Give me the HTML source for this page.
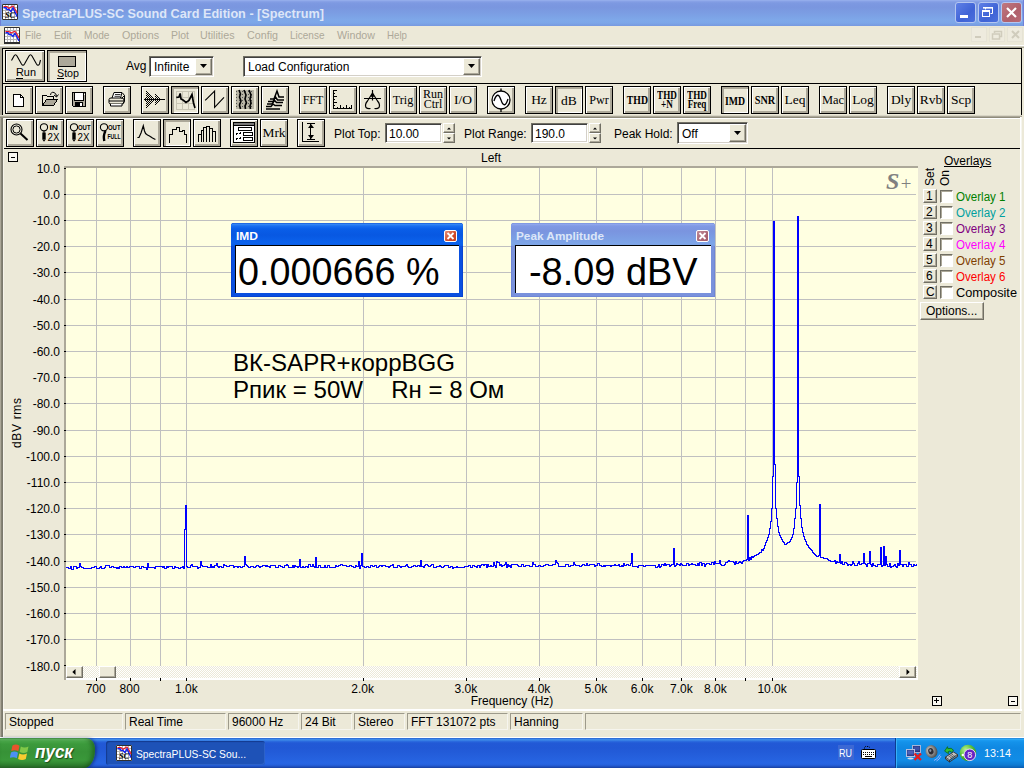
<!DOCTYPE html>
<html><head><meta charset="utf-8"><title>SpectraPLUS-SC Sound Card Edition - [Spectrum]</title>
<style>
html,body{margin:0;padding:0}
body{width:1024px;height:768px;overflow:hidden;background:#ece9d8;position:relative;font-family:"Liberation Sans",sans-serif;font-size:12px;color:#000}
div,span{box-sizing:border-box}
.a{position:absolute}
.t{position:absolute;white-space:nowrap;line-height:1}
#title{left:0;top:0;width:1024px;height:26px;box-shadow:inset 1px 0 0 #6f80d8,inset -1px 0 0 #6f80d8;background:linear-gradient(#9cb4ee 0,#8aa4e8 1px,#7d99e1 3px,#7a96df 7px,#7b9ce2 12px,#7ea8e9 20px,#7ca6e8 23px,#7799df 26px)}
#title .cap{left:22px;top:5px;font-weight:bold;font-size:13.5px;color:#dbe5f8;letter-spacing:0}
.tb{position:absolute;top:2px;width:21px;height:21px;border-radius:3px;border:1px solid #b4c6f0}
#menu .m{top:30px;font-size:11.5px;color:#aca899}
.btn{position:absolute;width:28px;height:28px;background:#ece9d8;border:1px solid #000;box-shadow:inset 1px 1px 0 #fff,inset -1px -1px 0 #aca899,inset -2px -2px 0 #aca899}
.btn.p{background:#ece9d8;box-shadow:inset 1px 1px 0 #aca899,inset 2px 2px 0 #aca899,inset -1px -1px 0 #fff}
.btn svg{position:absolute;left:0;top:0}
.bt{position:absolute;left:0;width:26px;text-align:center;font-family:"Liberation Serif",serif;font-size:11px;line-height:1;white-space:nowrap}
.inp{position:absolute;background:#fff;border:1px solid #716f64;box-shadow:inset 1px 1px 0 #404040,inset -1px -1px 0 #d4d0c8;border-right-color:#fff;border-bottom-color:#fff}
.st{position:absolute;top:713px;height:17px;border:1px solid;border-color:#9d9a8b #f6f5ee #f6f5ee #9d9a8b}
.st span{position:absolute;left:3px;top:2px;font-size:12px;white-space:nowrap;line-height:1}
</style></head><body>
<div id="title" class="a"><svg class="a" style="left:22px;top:2.5px;overflow:visible" width="305" height="21"><text x="0" y="15.0" font-family="Liberation Sans,sans-serif" font-size="13.3" font-weight="bold" font-style="normal" fill="#dde6f8" textLength="302" lengthAdjust="spacingAndGlyphs">SpectraPLUS-SC Sound Card Edition - [Spectrum]</text></svg><svg class="a" style="left:2px;top:4px" width="16" height="16" viewBox="0 0 16 16"><rect x="0" y="0" width="16" height="16" fill="#fff"/><path d="M3.500 1V15M6.500 1V15M9.500 1V15M12.500 1V15M1 3.500H15M1 6.500H15M1 9.500H15M1 12.500H15" stroke="#b4b4b4" stroke-width="1" shape-rendering="crispEdges"/><path d="M0.500 0.500H15.500V15.500H0.500Z" fill="none" stroke="#303030"/><path d="M1.500 2.500H5L7 4.500L9 3L11 2L13 5L15 9" fill="none" stroke="#f01828" stroke-width="1.200"/><path d="M1.500 3.800H4L5 5.500H7L9 7.500L11 4L13 8L15 12.500" fill="none" stroke="#1020f0" stroke-width="1.400"/><text x="3" y="13.800" font-family="Liberation Serif,serif" font-style="italic" font-weight="bold" font-size="9" fill="#000" textLength="10" lengthAdjust="spacingAndGlyphs">SC</text></svg><div class="tb" style="left:955px;background:linear-gradient(135deg,#5f80e6,#3f63d6 60%,#4a6fdc)"><div class="a" style="left:4px;top:12px;width:8px;height:3px;background:#fff"></div></div><div class="tb" style="left:978px;background:linear-gradient(135deg,#5f80e6,#3f63d6 60%,#4a6fdc)"><svg class="a" style="left:0;top:0" width="19" height="19"><path d="M6.5 6.5V4.5H13.5V10.5H11.5" fill="none" stroke="#fff" stroke-width="1"/><rect x="4" y="4" width="10" height="1.6" fill="#fff"/><rect x="3.5" y="7.5" width="7" height="6" fill="none" stroke="#fff"/><rect x="3" y="7" width="8" height="2" fill="#fff"/></svg></div><div class="tb" style="left:1001px;background:linear-gradient(135deg,#c07880,#b0606c 60%,#b86a74)"><svg class="a" style="left:0;top:0" width="19" height="19"><path d="M5 5L14 14M14 5L5 14" stroke="#fff" stroke-width="2.2"/></svg></div></div><div id="menu"><svg class="a" style="left:4px;top:27px" width="16" height="17" viewBox="0 0 16 17"><rect x="0" y="0" width="16" height="17" fill="#fff"/><path d="M3.500 1V15M6.500 1V15M9.500 1V15M12.500 1V15M1 3.500H15M1 6.500H15M1 9.500H15M1 12.500H15" stroke="#b4b4b4" stroke-width="1" shape-rendering="crispEdges"/><path d="M0.500 0.500H15.500V15.500H0.500Z" fill="none" stroke="#303030"/><rect x="0" y="15" width="16" height="2" fill="#303030"/><path d="M1.500 4.500H5L7 6L9 5L11 4.500L13 7L15 11" fill="none" stroke="#f01828" stroke-width="1.200"/><path d="M1.500 5.800H4L5 7.500H7L9 9.500L11 6.500L13 10L15 14" fill="none" stroke="#1020f0" stroke-width="1.400"/></svg><svg class="a" style="left:25px;top:25.700000000000003px;overflow:visible" width="19" height="18"><text x="0" y="13.0" font-family="Liberation Sans,sans-serif" font-size="11.3" font-weight="normal" font-style="normal" fill="#aca899" textLength="16.5" lengthAdjust="spacingAndGlyphs">File</text></svg><svg class="a" style="left:53.5px;top:25.700000000000003px;overflow:visible" width="20" height="18"><text x="0" y="13.0" font-family="Liberation Sans,sans-serif" font-size="11.3" font-weight="normal" font-style="normal" fill="#aca899" textLength="17.5" lengthAdjust="spacingAndGlyphs">Edit</text></svg><svg class="a" style="left:83.5px;top:25.700000000000003px;overflow:visible" width="28" height="18"><text x="0" y="13.0" font-family="Liberation Sans,sans-serif" font-size="11.3" font-weight="normal" font-style="normal" fill="#aca899" textLength="25.5" lengthAdjust="spacingAndGlyphs">Mode</text></svg><svg class="a" style="left:121.5px;top:25.700000000000003px;overflow:visible" width="40" height="18"><text x="0" y="13.0" font-family="Liberation Sans,sans-serif" font-size="11.3" font-weight="normal" font-style="normal" fill="#aca899" textLength="37" lengthAdjust="spacingAndGlyphs">Options</text></svg><svg class="a" style="left:170.5px;top:25.700000000000003px;overflow:visible" width="21" height="18"><text x="0" y="13.0" font-family="Liberation Sans,sans-serif" font-size="11.3" font-weight="normal" font-style="normal" fill="#aca899" textLength="18" lengthAdjust="spacingAndGlyphs">Plot</text></svg><svg class="a" style="left:200px;top:25.700000000000003px;overflow:visible" width="37" height="18"><text x="0" y="13.0" font-family="Liberation Sans,sans-serif" font-size="11.3" font-weight="normal" font-style="normal" fill="#aca899" textLength="34.5" lengthAdjust="spacingAndGlyphs">Utilities</text></svg><svg class="a" style="left:246.5px;top:25.700000000000003px;overflow:visible" width="34" height="18"><text x="0" y="13.0" font-family="Liberation Sans,sans-serif" font-size="11.3" font-weight="normal" font-style="normal" fill="#aca899" textLength="31" lengthAdjust="spacingAndGlyphs">Config</text></svg><svg class="a" style="left:289.5px;top:25.700000000000003px;overflow:visible" width="37" height="18"><text x="0" y="13.0" font-family="Liberation Sans,sans-serif" font-size="11.3" font-weight="normal" font-style="normal" fill="#aca899" textLength="34.5" lengthAdjust="spacingAndGlyphs">License</text></svg><svg class="a" style="left:336.5px;top:25.700000000000003px;overflow:visible" width="41" height="18"><text x="0" y="13.0" font-family="Liberation Sans,sans-serif" font-size="11.3" font-weight="normal" font-style="normal" fill="#aca899" textLength="38" lengthAdjust="spacingAndGlyphs">Window</text></svg><svg class="a" style="left:386.5px;top:25.700000000000003px;overflow:visible" width="23" height="18"><text x="0" y="13.0" font-family="Liberation Sans,sans-serif" font-size="11.3" font-weight="normal" font-style="normal" fill="#aca899" textLength="20" lengthAdjust="spacingAndGlyphs">Help</text></svg><svg class="a" style="left:970px;top:26px" width="54" height="18"><g fill="none" stroke="#d6d2c2"><rect x="1.5" y="1.5" width="15" height="14" fill="#eeebde" stroke="#e6e3d5"/><rect x="19.5" y="1.5" width="15" height="14" fill="#eeebde" stroke="#e6e3d5"/><rect x="37.5" y="1.5" width="15" height="14" fill="#eeebde" stroke="#e6e3d5"/></g><rect x="5" y="10" width="6" height="2" fill="#d0ccbc"/><path d="M24.5 7V5.5H31.5V10.5H30" fill="none" stroke="#d0ccbc" stroke-width="1.5"/><rect x="22.5" y="8" width="7" height="5" fill="none" stroke="#d0ccbc" stroke-width="1.5"/><path d="M42 5L49 12M49 5L42 12" stroke="#d0ccbc" stroke-width="2"/></svg></div><div class="a" style="left:0;top:45px;width:1024px;height:1px;background:#fff"></div><div class="a" style="left:0;top:46px;width:1024px;height:2px;background:linear-gradient(#d2cfbf 0,#d2cfbf 1px,#a8a594 1px)"></div><div class="a" style="left:0;top:47px;width:2px;height:69px;background:#aca899"></div><div class="a" style="left:2px;top:48px;width:1020px;height:36px;border:1px solid #000"></div><div class="a" style="left:2px;top:83px;width:1020px;height:33px;border:1px solid #000;border-bottom:0"></div><div class="a" style="left:0;top:115px;width:1022px;height:4px;background:linear-gradient(#d8d5c5 0,#d8d5c5 1px,#aca899 1px,#aca899 2px,#8f8c7c 2px,#8f8c7c 3px,#fff 3px)"></div><div class="a" style="left:3px;top:148px;width:1018px;height:1px;background:#000"></div><div class="a" style="left:0;top:118px;width:4px;height:620px;background:linear-gradient(90deg,#aca899 0,#aca899 1px,#8a8878 1px,#77756a 3px,#f6f4ea 3px)"></div><div class="a" style="left:1020px;top:117px;width:2px;height:592px;background:linear-gradient(90deg,#fff 0,#fff 1px,#f6f5ee 1px)"></div><div class="btn" style="left:5px;top:50px;width:40px;height:32px"><svg width="38" height="30" viewBox="0 0 38 30" shape-rendering="crispEdges" ><path d="M5.500 9.500L8 5Q9.500 2.500 11 5L15.500 13Q17 15.500 18.500 13L23 5Q24.500 2.500 26 5L30.500 13Q32 15.500 33.500 13L34.500 9" fill="none" stroke="#000" stroke-width="1.100" shape-rendering="auto"/></svg></div><svg class="a" style="left:15.5px;top:63.3px;overflow:visible" width="23" height="19"><text x="0" y="13.0" font-family="Liberation Sans,sans-serif" font-size="11.5" font-weight="normal" font-style="normal" fill="#000" textLength="20" lengthAdjust="spacingAndGlyphs">Run</text></svg><div class="a" style="left:16px;top:78px;width:7px;height:1px;background:#000"></div><div class="btn p" style="left:47px;top:50px;width:40px;height:32px"><div class="a" style="left:10px;top:5px;width:18px;height:11px;background:#aca899;border:1px solid #000"></div></div><svg class="a" style="left:56.5px;top:63.5px;overflow:visible" width="25" height="19"><text x="0" y="13.0" font-family="Liberation Sans,sans-serif" font-size="11.5" font-weight="normal" font-style="normal" fill="#000" textLength="22" lengthAdjust="spacingAndGlyphs">Stop</text></svg><div class="a" style="left:57px;top:78px;width:7px;height:1px;background:#000"></div><span class="t" style="left:126px;top:60px;font-size:12px">Avg</span><div class="inp" style="left:149px;top:56px;width:65px;height:21px"><span class="t" style="left:4px;top:4px;font-size:12px">Infinite</span><div class="a" style="right:1px;top:1px;width:17px;height:17px;background:#ece9d8;border:1px solid;border-color:#fff #716f64 #716f64 #fff;box-shadow:inset -1px -1px 0 #aca899"><svg class="a" style="left:4px;top:5px" width="7" height="4"><path d="M0 0H7L3.500 4Z" fill="#000"/></svg></div></div><div class="inp" style="left:243px;top:56px;width:239px;height:21px"><span class="t" style="left:4px;top:4px;font-size:12px">Load Configuration</span><div class="a" style="right:1px;top:1px;width:17px;height:17px;background:#ece9d8;border:1px solid;border-color:#fff #716f64 #716f64 #fff;box-shadow:inset -1px -1px 0 #aca899"><svg class="a" style="left:4px;top:5px" width="7" height="4"><path d="M0 0H7L3.500 4Z" fill="#000"/></svg></div></div><div class="btn" style="left:5px;top:86px;width:28px;height:28px"><svg width="26" height="26" viewBox="0 0 26 26" shape-rendering="crispEdges" ><path d="M7.5 7.5H14.5L17.5 10.5V19.5H7.5Z" fill="#fff" stroke="#000"/><path d="M14.5 7.5V10.5H17.5" fill="none" stroke="#000"/></svg></div><div class="btn" style="left:35px;top:86px;width:28px;height:28px"><svg width="26" height="26" viewBox="0 0 26 26" shape-rendering="crispEdges" ><path d="M6.500 18.500V8.500H10.500L11.500 9.500H17.500V12.500" fill="none" stroke="#000"/><path d="M6.500 18.500L10.500 12.500H21.500L17.500 18.500Z" fill="#aca899" stroke="#000"/><path d="M14.500 8Q15 4.500 18 5.500Q20.500 6.500 20.500 9.500M20.500 10L18 8M20.500 10L22.500 7.500" fill="none" stroke="#000" shape-rendering="auto"/></svg></div><div class="btn" style="left:65px;top:86px;width:28px;height:28px"><svg width="26" height="26" viewBox="0 0 26 26" shape-rendering="crispEdges" ><path d="M6.500 5.500H19.500V19.500H7.500L6.500 18.500Z" fill="#aca899" stroke="#000"/><rect x="9" y="6" width="8" height="7" fill="#fff"/><path d="M8.500 5.500V13.500H17.500V5.500" fill="none" stroke="#000"/><rect x="9" y="15" width="8" height="4" fill="#000"/><rect x="14" y="16" width="2" height="3" fill="#fff"/><rect x="18" y="7" width="1" height="1" fill="#fff"/></svg></div><div class="btn" style="left:103px;top:86px;width:28px;height:28px"><svg width="26" height="26" viewBox="0 0 26 26" shape-rendering="crispEdges" ><g shape-rendering="auto" fill="none" stroke="#000"><path d="M8 11L10 5.500H18L16.500 11" fill="#fff"/><path d="M11 7.500H16.500M10.500 9.300H16" stroke-width="0.8"/><path d="M5 12.500Q5 11 7 11H17.500Q20 11 20 13V15.500Q20 17 18 17H7Q5 17 5 15.500Z" fill="#ece9d8"/><path d="M5 14H20" /><path d="M6.500 17V19H18V17" fill="#fff"/><path d="M17.500 11.500L20.500 8.500V14.500L18.500 16.500" /><path d="M18.500 6L20.500 8.500"/></g></svg></div><div class="btn" style="left:141px;top:86px;width:28px;height:28px"><svg width="26" height="26" viewBox="0 0 26 26" shape-rendering="crispEdges" ><defs><pattern id="chk" width="2" height="2" patternUnits="userSpaceOnUse"><rect x="0" y="0" width="1" height="1" fill="#000"/><rect x="1" y="1" width="1" height="1" fill="#000"/></pattern></defs><path d="M4 4L12.500 12.500L4 21Z" fill="url(#chk)"/><path d="M13 6L20.500 12.500L13 19Z" fill="url(#chk)"/><path d="M2 12.500H23" stroke="#000" stroke-width="1"/><path d="M2 12.500L4 11V14Z" fill="#000"/></svg></div><div class="btn p" style="left:171px;top:86px;width:28px;height:28px"><svg width="26" height="26" viewBox="0 0 26 26" shape-rendering="crispEdges" ><rect x="4.500" y="4.500" width="18" height="18" fill="none" stroke="#c8c5b4"/><path d="M10.500 5V22M16.500 5V22M5 10.500H22M5 16.500H22" stroke="#c8c5b4" fill="none"/><path d="M4.300 10.300L7 10L8.200 6.400L9 12L11 13L14 15.500L17 13.500L20 7.500L21.500 16L23 21" fill="none" stroke="#000" stroke-width="1.700" shape-rendering="auto"/></svg></div><div class="btn" style="left:201px;top:86px;width:28px;height:28px"><svg width="26" height="26" viewBox="0 0 26 26" shape-rendering="crispEdges" ><path d="M3.200 13.400L12.600 4V20.400L22 10.300" fill="none" stroke="#000" stroke-width="1.100" shape-rendering="auto"/></svg></div><div class="btn" style="left:231px;top:86px;width:28px;height:28px"><svg width="26" height="26" viewBox="0 0 26 26" shape-rendering="crispEdges" ><defs><pattern id="dot" width="3" height="3" patternUnits="userSpaceOnUse"><rect x="0" y="0" width="3" height="3" fill="#b9b6a6"/><rect x="1" y="1" width="1" height="1" fill="#555"/></pattern></defs><rect x="4" y="3" width="18" height="19" fill="url(#dot)"/><g shape-rendering="auto" fill="none" stroke="#000" stroke-width="1.600"><path d="M7 3L8.500 7L7.500 10L9 14L7.500 18L8.500 22"/><path d="M12 3L14 8L13 12L14.500 16L13 19L13.500 22"/><path d="M17 3L19 8L18 12L19 16L18 19L18.500 22"/></g></svg></div><div class="btn" style="left:261px;top:86px;width:28px;height:28px"><svg width="26" height="26" viewBox="0 0 26 26" shape-rendering="crispEdges" ><g shape-rendering="auto" fill="none" stroke="#000" stroke-width="1.500"><path d="M8 12H12L15 4L17 10H22"/><path d="M6 14.500H11L13.500 10L15.500 13H22"/><path d="M5 17H10L12.500 13.500L14.500 15.500H21"/><path d="M4 19.500H9L11 17L13 18.500H20"/><path d="M4 22H18"/></g></svg></div><div class="btn" style="left:299px;top:86px;width:28px;height:28px"><span class="bt" style="top:7px;font-size:12px;font-family:'Liberation Serif',serif;font-weight:normal;letter-spacing:0px">FFT</span></div><div class="btn" style="left:329px;top:86px;width:28px;height:28px"><svg width="26" height="26" viewBox="0 0 26 26" shape-rendering="crispEdges" ><path d="M3.500 3V21.500H22" fill="none" stroke="#000"/><path d="M4 3.500H7M4 6.500H5M4 9.500H7M4 12.500H5M4 15.500H7M4 18.500H5M7.500 21V20M10.500 21V18M13.500 21V20M16.500 21V18M19.500 21V20M21.500 21V18" stroke="#000" fill="none"/></svg></div><div class="btn" style="left:359px;top:86px;width:28px;height:28px"><svg width="26" height="26" viewBox="0 0 26 26" shape-rendering="crispEdges" ><g shape-rendering="auto" fill="none" stroke="#000" stroke-width="1.200"><path d="M12.500 3V13.500M4 11.500H21"/><path d="M12.500 6L7.500 14Q4.500 17.500 6 20.500Q7.500 22 10.500 21.500M12.500 6L17.500 14Q20.500 17.500 19 20.500Q17.500 22 14.500 21.500"/><path d="M11 8.500H14" stroke-width="2.500"/></g></svg></div><div class="btn" style="left:389px;top:86px;width:28px;height:28px"><span class="bt" style="top:6px;font-size:13.5px;font-family:'Liberation Serif',serif;font-weight:normal;letter-spacing:0px;transform:scaleX(0.9)">Trig</span></div><div class="btn" style="left:419px;top:86px;width:28px;height:28px"><span class="bt" style="top:1px;font-size:12px;font-family:'Liberation Serif',serif;font-weight:normal;letter-spacing:0px">Run</span><span class="bt" style="top:11px;font-size:12px;font-family:'Liberation Serif',serif;font-weight:normal;letter-spacing:0px">Ctrl</span></div><div class="btn" style="left:449px;top:86px;width:28px;height:28px"><span class="bt" style="top:6px;font-size:13.5px;font-family:'Liberation Serif',serif;font-weight:normal;letter-spacing:0px">I/O</span></div><div class="btn" style="left:487px;top:86px;width:28px;height:28px"><svg width="26" height="26" viewBox="0 0 26 26" shape-rendering="crispEdges" ><g shape-rendering="auto" fill="#fff" stroke="#000" stroke-width="1.3"><circle cx="13" cy="13" r="9"/><path d="M13 1.500V4M13 22V25" /><path d="M6 14Q9.500 3 13 13T20 12" fill="none"/></g></svg></div><div class="btn" style="left:525px;top:86px;width:28px;height:28px"><span class="bt" style="top:6px;font-size:13.5px;font-family:'Liberation Serif',serif;font-weight:normal;letter-spacing:0px">Hz</span></div><div class="btn p" style="left:555px;top:86px;width:28px;height:28px"><span class="bt" style="top:7px;font-size:13.5px;font-family:'Liberation Serif',serif;font-weight:normal;letter-spacing:0px">dB</span></div><div class="btn" style="left:585px;top:86px;width:28px;height:28px"><span class="bt" style="top:6px;font-size:13.5px;font-family:'Liberation Serif',serif;font-weight:normal;letter-spacing:0px;transform:scaleX(0.9)">Pwr</span></div><div class="btn" style="left:623px;top:86px;width:28px;height:28px"><span class="bt" style="top:7px;font-size:12.5px;font-family:'Liberation Serif',serif;font-weight:bold;letter-spacing:0px;transform:scaleX(0.78)">THD</span></div><div class="btn" style="left:653px;top:86px;width:28px;height:28px"><span class="bt" style="top:2px;font-size:12px;font-family:'Liberation Serif',serif;font-weight:bold;letter-spacing:0px;transform:scaleX(0.76)">THD</span><span class="bt" style="top:11px;font-size:12px;font-family:'Liberation Serif',serif;font-weight:bold;letter-spacing:0px;transform:scaleX(0.76)">+N</span></div><div class="btn" style="left:683px;top:86px;width:28px;height:28px"><span class="bt" style="top:2px;font-size:12px;font-family:'Liberation Serif',serif;font-weight:bold;letter-spacing:0px;transform:scaleX(0.76)">THD</span><span class="bt" style="top:11px;font-size:12px;font-family:'Liberation Serif',serif;font-weight:bold;letter-spacing:0px;transform:scaleX(0.76)">Freq</span></div><div class="btn p" style="left:721px;top:86px;width:28px;height:28px"><span class="bt" style="top:8px;font-size:12.5px;font-family:'Liberation Serif',serif;font-weight:bold;letter-spacing:0px;transform:scaleX(0.78)">IMD</span></div><div class="btn" style="left:751px;top:86px;width:28px;height:28px"><span class="bt" style="top:7px;font-size:12.5px;font-family:'Liberation Serif',serif;font-weight:bold;letter-spacing:0px;transform:scaleX(0.82)">SNR</span></div><div class="btn" style="left:781px;top:86px;width:28px;height:28px"><span class="bt" style="top:6px;font-size:13.5px;font-family:'Liberation Serif',serif;font-weight:normal;letter-spacing:0px">Leq</span></div><div class="btn" style="left:819px;top:86px;width:28px;height:28px"><span class="bt" style="top:6px;font-size:13.5px;font-family:'Liberation Serif',serif;font-weight:normal;letter-spacing:0px;transform:scaleX(0.92)">Mac</span></div><div class="btn" style="left:849px;top:86px;width:28px;height:28px"><span class="bt" style="top:6px;font-size:13.5px;font-family:'Liberation Serif',serif;font-weight:normal;letter-spacing:0px">Log</span></div><div class="btn" style="left:887px;top:86px;width:28px;height:28px"><span class="bt" style="top:6px;font-size:13.5px;font-family:'Liberation Serif',serif;font-weight:normal;letter-spacing:0px">Dly</span></div><div class="btn" style="left:917px;top:86px;width:28px;height:28px"><span class="bt" style="top:6px;font-size:13.5px;font-family:'Liberation Serif',serif;font-weight:normal;letter-spacing:0px">Rvb</span></div><div class="btn" style="left:947px;top:86px;width:28px;height:28px"><span class="bt" style="top:6px;font-size:13.5px;font-family:'Liberation Serif',serif;font-weight:normal;letter-spacing:0px">Scp</span></div><div class="btn" style="left:6px;top:119px;width:28px;height:28px"><svg width="26" height="26" viewBox="0 0 26 26" shape-rendering="crispEdges" ><g shape-rendering="auto" fill="none" stroke="#000"><circle cx="9.500" cy="9.500" r="5.500" stroke-width="1.1"/><circle cx="9.500" cy="9.500" r="3.600" stroke-width="1"/><path d="M13.500 13.500L20.500 20" stroke-width="2"/></g></svg></div><div class="btn" style="left:36px;top:119px;width:28px;height:28px"><svg width="26" height="26" viewBox="0 0 26 26" shape-rendering="crispEdges" ><g shape-rendering="auto" fill="none" stroke="#000"><circle cx="7" cy="7.300" r="3.600" stroke-width="1.100"/><path d="M7 11V13" stroke-width="1"/><path d="M7 12.500V19.500" stroke-width="3.400"/><path d="M5.300 19.500L7 21.800L8.700 19.500Z" fill="#000" stroke="none"/></g><text x="12.5" y="10" font-family="Liberation Sans,sans-serif" font-size="7" font-weight="bold" textLength="8.5" lengthAdjust="spacingAndGlyphs">IN</text><text x="10.500" y="21.300" font-family="Liberation Sans,sans-serif" font-size="11" textLength="12" lengthAdjust="spacingAndGlyphs">2X</text></svg></div><div class="btn" style="left:66px;top:119px;width:28px;height:28px"><svg width="26" height="26" viewBox="0 0 26 26" shape-rendering="crispEdges" ><g shape-rendering="auto" fill="none" stroke="#000"><circle cx="7" cy="7.300" r="3.600" stroke-width="1.100"/><path d="M7 11V13" stroke-width="1"/><path d="M7 12.500V19.500" stroke-width="3.400"/><path d="M5.300 19.500L7 21.800L8.700 19.500Z" fill="#000" stroke="none"/></g><text x="11" y="10" font-family="Liberation Sans,sans-serif" font-size="7" font-weight="bold" textLength="12.5" lengthAdjust="spacingAndGlyphs">OUT</text><text x="10.500" y="21.300" font-family="Liberation Sans,sans-serif" font-size="11" textLength="12" lengthAdjust="spacingAndGlyphs">2X</text></svg></div><div class="btn" style="left:96px;top:119px;width:28px;height:28px"><svg width="26" height="26" viewBox="0 0 26 26" shape-rendering="crispEdges" ><g shape-rendering="auto" fill="none" stroke="#000"><circle cx="7" cy="7.300" r="3.600" stroke-width="1.100"/><path d="M8.500 11Q6 15.500 7.300 21" stroke-width="2.400"/></g><text x="11" y="10" font-family="Liberation Sans,sans-serif" font-size="7" font-weight="bold" textLength="12.500" lengthAdjust="spacingAndGlyphs">OUT</text><text x="10.500" y="19" font-family="Liberation Sans,sans-serif" font-size="7" font-weight="bold" textLength="13" lengthAdjust="spacingAndGlyphs">FULL</text></svg></div><div class="btn" style="left:133px;top:119px;width:28px;height:28px"><svg width="26" height="26" viewBox="0 0 26 26" shape-rendering="crispEdges" ><path d="M3.400 17.500H5L7 13L9.300 5.800L10.500 11L11.600 13.600L13.500 15L15.500 16L18.500 18L21.400 19.500" fill="none" stroke="#000" stroke-width="1.200" shape-rendering="auto"/></svg></div><div class="btn p" style="left:163px;top:119px;width:28px;height:28px"><svg width="26" height="26" viewBox="0 0 26 26" shape-rendering="crispEdges" ><path d="M5.500 22.500V14.500H8.500V9.500H12.500V7.500H15.500V11.500H18.500V10.500H20.500V14.500H22.500V22.500" fill="none" stroke="#000" stroke-width="1"/></svg></div><div class="btn" style="left:193px;top:119px;width:28px;height:28px"><svg width="26" height="26" viewBox="0 0 26 26" shape-rendering="crispEdges" ><path d="M4.500 21.500V14.500H7.500V21.500M7.500 14.500V10.500H9.500V21.500M9.500 10.500V7.500H12.500V21.500M12.500 7.500V6.500H15.500V21.500M15.500 8.500H18.500V21.500M18.500 11.500H21.500V21.500" fill="none" stroke="#000"/></svg></div><div class="btn" style="left:230px;top:119px;width:28px;height:28px"><svg width="26" height="26" viewBox="0 0 26 26" shape-rendering="crispEdges" ><rect x="2.500" y="2.500" width="21" height="20" fill="#fff" stroke="#000"/><rect x="3" y="3" width="20" height="2" fill="#777"/><path d="M3 5.500H23" stroke="#000"/><rect x="7.500" y="7.500" width="13" height="3" fill="#fff" stroke="#000"/><rect x="12.500" y="12.500" width="9" height="3" fill="#fff" stroke="#000"/><rect x="12.500" y="17.500" width="9" height="3" fill="#fff" stroke="#000"/><path d="M5 13.500H7M8 13.500H10M5 18.500H7M8 18.500H10M5 14.500H6M9 12.500H10M5 19.500H6M9 17.500H10" stroke="#000"/></svg></div><div class="btn" style="left:260px;top:119px;width:28px;height:28px"><span class="bt" style="top:6px;font-size:13.5px;font-family:'Liberation Serif',serif;font-weight:normal;letter-spacing:0px">Mrk</span></div><div class="btn" style="left:297px;top:119px;width:28px;height:28px"><svg width="26" height="26" viewBox="0 0 26 26" shape-rendering="crispEdges" ><path d="M4.500 2V21.500H21" fill="none" stroke="#000"/><path d="M9 3.500H17M9 19.500H17M12.500 4V19" stroke="#000" fill="none"/><path d="M13 4L10 8H16ZM13 19L10 15H16Z" fill="#000" shape-rendering="auto"/></svg></div><span class="t" style="left:334px;top:128px;font-size:12px">Plot Top:</span><div class="inp" style="left:385px;top:123px;width:57px;height:20px"><span class="t" style="left:3px;top:4px;font-size:12px">10.00</span></div><div class="a" style="left:443px;top:123px;width:12px;height:20px"><div style="position:absolute;left:0;width:12px;height:10px;background:#ece9d8;border:1px solid;border-color:#fff #716f64 #716f64 #fff;box-shadow:inset -1px -1px 0 #aca899;top:0"><svg class="a" style="left:3px;top:3px" width="5" height="3"><path d="M0 2.500L2 0.500L4 2.500Z" fill="#000"/></svg></div><div style="position:absolute;left:0;width:12px;height:10px;background:#ece9d8;border:1px solid;border-color:#fff #716f64 #716f64 #fff;box-shadow:inset -1px -1px 0 #aca899;top:10px"><svg class="a" style="left:3px;top:3px" width="5" height="3"><path d="M0 0.500L2 2.500L4 0.500Z" fill="#000"/></svg></div></div><span class="t" style="left:464px;top:128px;font-size:12px">Plot Range:</span><div class="inp" style="left:531px;top:123px;width:57px;height:20px"><span class="t" style="left:3px;top:4px;font-size:12px">190.0</span></div><div class="a" style="left:589px;top:123px;width:12px;height:20px"><div style="position:absolute;left:0;width:12px;height:10px;background:#ece9d8;border:1px solid;border-color:#fff #716f64 #716f64 #fff;box-shadow:inset -1px -1px 0 #aca899;top:0"><svg class="a" style="left:3px;top:3px" width="5" height="3"><path d="M0 2.500L2 0.500L4 2.500Z" fill="#000"/></svg></div><div style="position:absolute;left:0;width:12px;height:10px;background:#ece9d8;border:1px solid;border-color:#fff #716f64 #716f64 #fff;box-shadow:inset -1px -1px 0 #aca899;top:10px"><svg class="a" style="left:3px;top:3px" width="5" height="3"><path d="M0 0.500L2 2.500L4 0.500Z" fill="#000"/></svg></div></div><span class="t" style="left:614px;top:128px;font-size:12px">Peak Hold:</span><div class="inp" style="left:677px;top:122px;width:71px;height:22px"><span class="t" style="left:4px;top:5px;font-size:12px">Off</span><div class="a" style="right:1px;top:1px;width:17px;height:18px;background:#ece9d8;border:1px solid;border-color:#fff #716f64 #716f64 #fff;box-shadow:inset -1px -1px 0 #aca899"><svg class="a" style="left:4px;top:6px" width="7" height="4"><path d="M0 0H7L3.500 4Z" fill="#000"/></svg></div></div><div class="a" style="left:64px;top:166px;width:854px;height:514px;background:#fff;border-left:2px solid #aca899;border-top:2px solid #aca899"></div><svg class="a" style="left:0;top:0" width="1024" height="710" viewBox="0 0 1024 710"><rect x="66" y="168" width="852" height="498" fill="#ffffe1"/><path d="M96.5 168V666M130.5 168V666M160.5 168V666M186.5 168V666M363.5 168V666M466.5 168V666M539.5 168V666M596.5 168V666M642.5 168V666M681.5 168V666M715.5 168V666M745.5 168V666M772.5 168V666M66 194.5H916M66 220.5H916M66 246.5H916M66 272.5H916M66 299.5H916M66 325.5H916M66 351.5H916M66 377.5H916M66 403.5H916M66 430.5H916M66 456.5H916M66 482.5H916M66 508.5H916M66 534.5H916M66 561.5H916M66 587.5H916M66 613.5H916M66 639.5H916" stroke="#c0c0c0" stroke-width="1" fill="none" shape-rendering="crispEdges"/><path d="M64 168.5H66M64 194.5H66M64 220.5H66M64 246.5H66M64 272.5H66M64 299.5H66M64 325.5H66M64 351.5H66M64 377.5H66M64 403.5H66M64 430.5H66M64 456.5H66M64 482.5H66M64 508.5H66M64 534.5H66M64 561.5H66M64 587.5H66M64 613.5H66M64 639.5H66M64 665.5H66M96.5 678V681M130.5 678V681M160.5 678V681M186.5 678V681M363.5 678V681M466.5 678V681M539.5 678V681M596.5 678V681M642.5 678V681M681.5 678V681M715.5 678V681M745.5 678V681M772.5 678V681" stroke="#000" stroke-width="1" fill="none" shape-rendering="crispEdges"/><path d="M66 567.5H67.5H68.5V568.5H69.5H70.5V566.5H71.5V569.5H72.5H73.5V566.5H74.5H75.5H76.5V568.5H77.5V567.5H78.5H79.5V563.5H80.5V566.5H81.5V567.5H82.5H83.5V568.5H84.5H85.5H86.5H87.5H88.5H89.5H90.5H91.5V567.5H92.5H93.5H94.5V566.5H95.5H96.5V568.5H97.5H98.5H99.5V567.5H100.5V566.5H101.5V568.5H102.5H103.5H104.5V567.5H105.5V565.5H106.5H107.5H108.5H109.5V567.5H110.5H111.5V566.5H112.5H113.5V567.5H114.5H115.5H116.5V568.5H117.5V567.5H118.5V568.5H119.5V566.5H120.5H121.5V567.5H122.5H123.5V566.5H124.5V567.5H125.5H126.5V566.5H127.5V567.5H128.5H129.5V566.5H130.5H131.5H132.5H133.5V567.5H134.5H135.5V566.5H136.5H137.5H138.5H139.5V568.5H140.5H141.5V566.5H142.5H143.5V567.5H144.5H145.5H146.5V569.5H147.5V563.5H148.5V567.5H149.5H150.5H151.5H152.5H153.5H154.5V568.5H155.5V566.5H156.5H157.5H158.5H159.5H160.5H161.5H162.5V567.5H163.5V566.5H164.5V568.5H165.5H166.5V566.5H167.5V567.5H168.5V566.5H169.5H170.5H171.5H172.5V568.5H173.5H174.5V566.5H175.5V567.5H176.5H177.5H178.5V568.5H179.5H180.5V567.5H181.5H182.5V566.5H183.5V568.5H184.5V529.5H185.5V505.5H186.5V566.5H187.5V567.5H188.5H189.5H190.5V565.5H191.5V564.5H192.5V566.5H193.5H194.5H195.5H196.5H197.5V568.5H198.5V567.5H199.5H200.5V561.5H201.5V565.5H202.5V566.5H203.5H204.5H205.5H206.5H207.5V567.5H208.5H209.5H210.5V564.5H211.5V567.5H212.5V566.5H213.5V567.5H214.5V565.5H215.5H216.5V563.5H217.5V566.5H218.5V567.5H219.5V566.5H220.5H221.5V567.5H222.5H223.5V564.5H224.5V565.5H225.5H226.5V566.5H227.5H228.5H229.5V565.5H230.5H231.5H232.5H233.5V567.5H234.5V566.5H235.5H236.5H237.5V567.5H238.5V566.5H239.5H240.5V567.5H241.5H242.5V566.5H243.5H244.5V556.5H245.5V564.5H246.5V565.5H247.5V566.5H248.5V567.5H249.5H250.5V566.5H251.5H252.5H253.5V567.5H254.5H255.5V566.5H256.5V565.5H257.5H258.5V566.5H259.5V567.5H260.5V566.5H261.5H262.5V565.5H263.5H264.5H265.5V566.5H266.5V565.5H267.5V566.5H268.5H269.5V567.5H270.5V565.5H271.5H272.5H273.5H274.5H275.5V567.5H276.5H277.5H278.5V565.5H279.5H280.5V566.5H281.5H282.5V567.5H283.5H284.5V565.5H285.5H286.5V564.5H287.5V565.5H288.5V567.5H289.5H290.5H291.5H292.5V565.5H293.5V567.5H294.5V565.5H295.5V566.5H296.5H297.5V567.5H298.5V566.5H299.5V559.5H300.5V567.5H301.5H302.5V566.5H303.5V567.5H304.5H305.5V566.5H306.5H307.5V567.5H308.5V564.5H309.5H310.5V566.5H311.5H312.5V564.5H313.5V566.5H314.5V567.5H315.5V557.5H316.5V567.5H317.5H318.5V565.5H319.5H320.5V567.5H321.5H322.5H323.5H324.5V565.5H325.5V567.5H326.5H327.5V565.5H328.5H329.5V567.5H330.5H331.5H332.5H333.5H334.5H335.5V565.5H336.5V566.5H337.5H338.5V565.5H339.5H340.5V564.5H341.5H342.5V565.5H343.5H344.5H345.5H346.5V566.5H347.5H348.5H349.5V565.5H350.5H351.5V566.5H352.5H353.5V567.5H354.5H355.5V565.5H356.5V566.5H357.5H358.5V561.5H359.5V568.5H360.5V565.5H361.5V553.5H362.5V566.5H363.5H364.5V567.5H365.5H366.5V566.5H367.5H368.5V567.5H369.5H370.5V565.5H371.5H372.5V566.5H373.5H374.5V565.5H375.5H376.5V567.5H377.5H378.5V566.5H379.5V565.5H380.5H381.5V566.5H382.5V565.5H383.5H384.5H385.5V566.5H386.5H387.5H388.5V567.5H389.5V566.5H390.5V565.5H391.5H392.5V564.5H393.5V567.5H394.5H395.5H396.5H397.5V565.5H398.5H399.5V566.5H400.5V567.5H401.5V566.5H402.5H403.5H404.5H405.5V565.5H406.5V564.5H407.5V566.5H408.5V567.5H409.5H410.5H411.5V566.5H412.5H413.5V565.5H414.5H415.5V566.5H416.5H417.5V565.5H418.5H419.5V566.5H420.5V560.5H421.5V566.5H422.5H423.5V567.5H424.5V565.5H425.5V564.5H426.5H427.5V565.5H428.5V566.5H429.5H430.5V565.5H431.5V564.5H432.5H433.5V567.5H434.5H435.5H436.5V566.5H437.5H438.5H439.5V565.5H440.5V566.5H441.5V567.5H442.5H443.5V566.5H444.5V565.5H445.5H446.5H447.5H448.5V567.5H449.5H450.5V566.5H451.5H452.5V568.5H453.5V567.5H454.5H455.5H456.5V566.5H457.5V567.5H458.5H459.5H460.5H461.5H462.5H463.5H464.5V566.5H465.5H466.5H467.5H468.5V565.5H469.5H470.5V567.5H471.5H472.5V565.5H473.5H474.5V566.5H475.5H476.5V567.5H477.5V565.5H478.5H479.5V567.5H480.5V565.5H481.5V564.5H482.5H483.5V565.5H484.5V564.5H485.5H486.5V567.5H487.5V564.5H488.5V566.5H489.5H490.5V565.5H491.5V566.5H492.5H493.5V562.5H494.5V565.5H495.5V567.5H496.5V561.5H497.5V562.5H498.5H499.5V565.5H500.5V564.5H501.5V566.5H502.5V565.5H503.5H504.5V564.5H505.5V562.5H506.5V567.5H507.5V564.5H508.5V566.5H509.5V565.5H510.5V567.5H511.5V564.5H512.5H513.5H514.5H515.5H516.5H517.5V565.5H518.5V566.5H519.5H520.5H521.5V564.5H522.5H523.5V566.5H524.5H525.5V565.5H526.5H527.5H528.5H529.5V566.5H530.5H531.5H532.5V562.5H533.5V564.5H534.5H535.5V566.5H536.5H537.5H538.5V565.5H539.5H540.5V566.5H541.5H542.5H543.5V565.5H544.5H545.5V564.5H546.5H547.5H548.5V565.5H549.5H550.5H551.5H552.5V564.5H553.5H554.5H555.5V560.5H556.5V562.5H557.5V563.5H558.5V566.5H559.5H560.5H561.5H562.5H563.5H564.5H565.5V564.5H566.5H567.5H568.5V566.5H569.5H570.5V565.5H571.5H572.5H573.5V562.5H574.5V564.5H575.5V565.5H576.5H577.5H578.5H579.5V566.5H580.5H581.5V565.5H582.5V564.5H583.5H584.5V565.5H585.5H586.5V563.5H587.5V565.5H588.5H589.5V564.5H590.5H591.5H592.5H593.5H594.5V566.5H595.5V565.5H596.5H597.5V563.5H598.5H599.5V565.5H600.5H601.5V566.5H602.5H603.5V565.5H604.5V566.5H605.5V565.5H606.5H607.5H608.5H609.5H610.5V566.5H611.5V565.5H612.5H613.5H614.5V564.5H615.5V565.5H616.5H617.5H618.5V564.5H619.5V566.5H620.5H621.5V565.5H622.5V566.5H623.5V563.5H624.5V565.5H625.5H626.5V564.5H627.5H628.5V565.5H629.5H630.5V563.5H631.5V553.5H632.5V566.5H633.5H634.5H635.5H636.5H637.5V567.5H638.5V565.5H639.5H640.5H641.5H642.5H643.5V566.5H644.5H645.5V565.5H646.5H647.5H648.5H649.5H650.5H651.5H652.5H653.5H654.5H655.5V567.5H656.5H657.5V566.5H658.5V564.5H659.5V567.5H660.5V566.5H661.5V564.5H662.5H663.5V565.5H664.5V563.5H665.5V565.5H666.5V564.5H667.5H668.5H669.5V566.5H670.5V565.5H671.5V564.5H672.5H673.5V548.5H674.5V566.5H675.5V565.5H676.5V563.5H677.5V564.5H678.5H679.5V565.5H680.5V563.5H681.5V564.5H682.5V565.5H683.5H684.5H685.5H686.5V563.5H687.5H688.5V565.5H689.5V564.5H690.5H691.5V563.5H692.5V564.5H693.5H694.5H695.5V565.5H696.5H697.5V563.5H698.5V565.5H699.5V562.5H700.5H701.5V565.5H702.5V563.5H703.5H704.5V566.5H705.5V564.5H706.5V563.5H707.5H708.5H709.5V564.5H710.5H711.5V562.5H712.5H713.5V564.5H714.5V561.5H715.5V563.5H716.5H717.5H718.5H719.5V560.5H720.5V564.5H721.5V565.5H722.5H723.5H724.5V564.5H725.5V562.5H726.5H727.5V561.5H728.5V560.5H729.5V561.5H730.5H731.5H732.5H733.5V562.5H734.5V564.5H735.5V561.5H736.5V563.5H737.5H738.5V562.5H739.5V561.5H740.5V562.5H741.5V563.5H742.5V561.5H743.5V560.5H744.5H745.5H746.5V559.5H747.5V515.5H748.5V560.5H749.5V557.5H750.5V559.5H751.5V556.5H752.5V557.5H753.5V556.5H754.5V555.5H755.5H756.5V554.5H757.5H758.5V553.5H759.5V552.5H760.5H761.5V549.5H762.5V550.5H763.5V548.5H764.5V545.5H765.5V542.5H766.5V540.5H767.5V537.5H768.5V534.5H769.5V528.5H770.5V521.5H771.5V508.5H772.5V476.5H773.5V221.5H774.5V464.5H775.5V508.5H776.5V518.5H777.5V526.5H778.5V532.5H779.5V535.5H780.5V537.5H781.5V539.5H782.5V541.5H783.5V542.5H784.5V544.5H785.5H786.5V543.5H787.5V542.5H788.5H789.5V541.5H790.5V539.5H791.5V537.5H792.5V534.5H793.5V528.5H794.5V518.5H795.5V508.5H796.5V482.5H797.5V216.5H798.5V476.5H799.5V505.5H800.5V518.5H801.5V527.5H802.5V532.5H803.5V536.5H804.5V539.5H805.5V541.5H806.5V544.5H807.5V545.5H808.5V547.5H809.5V548.5H810.5V549.5H811.5V550.5H812.5V552.5H813.5V553.5H814.5V554.5H815.5V555.5H816.5V556.5H817.5H818.5V555.5H819.5V504.5H820.5V557.5H821.5H822.5H823.5V558.5H824.5H825.5H826.5H827.5V559.5H828.5V560.5H829.5H830.5V561.5H831.5H832.5H833.5H834.5V560.5H835.5V563.5H836.5V561.5H837.5V562.5H838.5H839.5V554.5H840.5V563.5H841.5V561.5H842.5V564.5H843.5H844.5V562.5H845.5H846.5V563.5H847.5V565.5H848.5V564.5H849.5H850.5V565.5H851.5V564.5H852.5V561.5H853.5V563.5H854.5V565.5H855.5H856.5H857.5V563.5H858.5V561.5H859.5V564.5H860.5H861.5V563.5H862.5H863.5V553.5H864.5V563.5H865.5V564.5H866.5V566.5H867.5V563.5H868.5H869.5V551.5H870.5V564.5H871.5V566.5H872.5V563.5H873.5V565.5H874.5H875.5V566.5H876.5H877.5V564.5H878.5H879.5H880.5V547.5H881.5V566.5H882.5V565.5H883.5V546.5H884.5V565.5H885.5V556.5H886.5V564.5H887.5V566.5H888.5H889.5V563.5H890.5V567.5H891.5V566.5H892.5H893.5V565.5H894.5V564.5H895.5V566.5H896.5V567.5H897.5V563.5H898.5V565.5H899.5V550.5H900.5V564.5H901.5H902.5V566.5H903.5V564.5H904.5H905.5H906.5V566.5H907.5H908.5V562.5H909.5V564.5H910.5H911.5V566.5H912.5H913.5V564.5H914.5V565.5H915.5H916.5V564.5H917" stroke="#0000ff" stroke-width="1" fill="none" shape-rendering="crispEdges"/><text x="60" y="172.5" text-anchor="end" font-size="12">10.0</text><text x="60" y="198.7" text-anchor="end" font-size="12">0.0</text><text x="60" y="224.9" text-anchor="end" font-size="12">-10.0</text><text x="60" y="251.1" text-anchor="end" font-size="12">-20.0</text><text x="60" y="277.3" text-anchor="end" font-size="12">-30.0</text><text x="60" y="303.6" text-anchor="end" font-size="12">-40.0</text><text x="60" y="329.8" text-anchor="end" font-size="12">-50.0</text><text x="60" y="356.0" text-anchor="end" font-size="12">-60.0</text><text x="60" y="382.2" text-anchor="end" font-size="12">-70.0</text><text x="60" y="408.4" text-anchor="end" font-size="12">-80.0</text><text x="60" y="434.6" text-anchor="end" font-size="12">-90.0</text><text x="60" y="460.8" text-anchor="end" font-size="12">-100.0</text><text x="60" y="487.0" text-anchor="end" font-size="12">-110.0</text><text x="60" y="513.2" text-anchor="end" font-size="12">-120.0</text><text x="60" y="539.4" text-anchor="end" font-size="12">-130.0</text><text x="60" y="565.6" text-anchor="end" font-size="12">-140.0</text><text x="60" y="591.9" text-anchor="end" font-size="12">-150.0</text><text x="60" y="618.1" text-anchor="end" font-size="12">-160.0</text><text x="60" y="644.3" text-anchor="end" font-size="12">-170.0</text><text x="60" y="670.5" text-anchor="end" font-size="12">-180.0</text><text x="95.7" y="693" text-anchor="middle" font-size="12">700</text><text x="129.6" y="693" text-anchor="middle" font-size="12">800</text><text x="186.4" y="693" text-anchor="middle" font-size="12">1.0k</text><text x="362.7" y="693" text-anchor="middle" font-size="12">2.0k</text><text x="465.8" y="693" text-anchor="middle" font-size="12">3.0k</text><text x="539.0" y="693" text-anchor="middle" font-size="12">4.0k</text><text x="595.8" y="693" text-anchor="middle" font-size="12">5.0k</text><text x="642.2" y="693" text-anchor="middle" font-size="12">6.0k</text><text x="681.4" y="693" text-anchor="middle" font-size="12">7.0k</text><text x="715.3" y="693" text-anchor="middle" font-size="12">8.0k</text><text x="772.1" y="693" text-anchor="middle" font-size="12">10.0k</text><text x="512" y="705" text-anchor="middle" font-size="12">Frequency (Hz)</text><text x="491" y="162" text-anchor="middle" font-size="12">Left</text><text transform="translate(21,448) rotate(-90)" font-size="12" textLength="50" lengthAdjust="spacing">dBV rms</text><text x="886" y="189" font-family="Liberation Serif,serif" font-style="italic" font-weight="bold" font-size="24" fill="#808080">S</text><text x="899.500" y="190" font-family="Liberation Serif,serif" font-style="italic" font-size="19" fill="#808080">+</text><text x="233" y="371" font-size="24" textLength="222" lengthAdjust="spacingAndGlyphs">ВК-SAPR+коррBGG</text><text x="233" y="397.800" font-size="24" textLength="130" lengthAdjust="spacingAndGlyphs">Рпик = 50W</text><text x="391.300" y="397.800" font-size="24" textLength="113" lengthAdjust="spacingAndGlyphs">Rн = 8 Ом</text></svg><div class="a" style="left:66px;top:666px;width:851px;height:12px;background:#f6f5ee;background-image:repeating-conic-gradient(#ece9d8 0 25%,#fff 0 50%);background-size:2px 2px"></div><div style="position:absolute;top:666px;height:12px;background:#ece9d8;border:1px solid;border-color:#fff #716f64 #716f64 #fff;box-shadow:inset -1px -1px 0 #aca899;left:66px;width:17px"><svg class="a" style="left:5px;top:2px" width="4" height="7"><path d="M3.500 0V6L0.300 3Z" fill="#000"/></svg></div><div style="position:absolute;top:666px;height:12px;background:#ece9d8;border:1px solid;border-color:#fff #716f64 #716f64 #fff;box-shadow:inset -1px -1px 0 #aca899;left:99px;width:17px"></div><div style="position:absolute;top:666px;height:12px;background:#ece9d8;border:1px solid;border-color:#fff #716f64 #716f64 #fff;box-shadow:inset -1px -1px 0 #aca899;left:899px;width:17px"><svg class="a" style="left:6px;top:2px" width="4" height="7"><path d="M0.500 0V6L3.700 3Z" fill="#000"/></svg></div><div class="a" style="left:8px;top:152px;width:10px;height:10px;border:1px solid #000;background:#f8f7f0"><div class="a" style="left:2px;top:4px;width:4px;height:1px;background:#000"></div></div><div class="a" style="left:932px;top:696px;width:10px;height:10px;border:1px solid #000;background:#f8f7f0"><div class="a" style="left:1px;top:3px;width:5px;height:1px;background:#000"></div><div class="a" style="left:3px;top:1px;width:1px;height:5px;background:#000"></div></div><div class="a" style="left:1008px;top:696px;width:10px;height:10px;border:1px solid #000;background:#f8f7f0"><div class="a" style="left:2px;top:4px;width:4px;height:1px;background:#000"></div></div><div class="a" style="left:231px;top:223px;width:232px;height:74px;background:#0a50e0;border-radius:3px 3px 0 0;box-shadow:inset 0 0 0 1px #0a44d0"><div class="a" style="left:0;top:0;width:232px;height:23px;background:linear-gradient(#0a47d0 0,#3a8cf6 1px,#1a6ef0 3px,#0a5ee8 6px,#0858e2 12px,#0c62ec 20px,#0a5ce6 100%);border-radius:3px 3px 0 0"></div><svg class="a" style="left:5px;top:4px;overflow:visible" width="25" height="18"><text x="0" y="13" font-family="Liberation Sans,sans-serif" font-size="11" font-weight="bold" font-style="normal" fill="#fff" textLength="22" lengthAdjust="spacingAndGlyphs">IMD</text></svg><div class="a" style="left:213px;top:7px;width:13px;height:12px;background:linear-gradient(135deg,#e89078,#d04a28 60%,#c8401c);border:1px solid #fff;border-radius:2px"><svg class="a" style="left:0;top:0" width="11" height="10"><path d="M2.500 2L8.500 8M8.500 2L2.500 8" stroke="#fff" stroke-width="1.800"/></svg></div><div class="a" style="left:4px;top:22px;width:224px;height:48px;background:#fff;border-top:1px solid #000;border-left:1px solid #000"></div><svg class="a" style="left:7.199999999999989px;top:19px;overflow:visible" width="204" height="59"><text x="0" y="43" font-family="Liberation Sans,sans-serif" font-size="38.3" font-weight="normal" font-style="normal" fill="#000" textLength="201.5" lengthAdjust="spacingAndGlyphs">0.000666 %</text></svg></div><div class="a" style="left:511px;top:223px;width:204px;height:74px;background:#7a92dc;border-radius:3px 3px 0 0;box-shadow:inset 0 0 0 1px #6f86d6"><div class="a" style="left:0;top:0;width:204px;height:23px;background:linear-gradient(#7088d8 0,#93aaee 1px,#8099e4 3px,#7a94df 8px,#7b9ce3 14px,#7ea6e8 21px,#7c9ee4 100%);border-radius:3px 3px 0 0"></div><svg class="a" style="left:5px;top:4px;overflow:visible" width="91" height="18"><text x="0" y="13" font-family="Liberation Sans,sans-serif" font-size="11" font-weight="bold" font-style="normal" fill="#dce6f8" textLength="88" lengthAdjust="spacingAndGlyphs">Peak Amplitude</text></svg><div class="a" style="left:185px;top:7px;width:13px;height:12px;background:linear-gradient(135deg,#c08c98,#ac6674 60%,#a45a68);border:1px solid #fff;border-radius:2px"><svg class="a" style="left:0;top:0" width="11" height="10"><path d="M2.500 2L8.500 8M8.500 2L2.500 8" stroke="#fff" stroke-width="1.800"/></svg></div><div class="a" style="left:4px;top:22px;width:196px;height:48px;background:#fff;border-top:1px solid #000;border-left:1px solid #000"></div><svg class="a" style="left:17.799999999999955px;top:19px;overflow:visible" width="171" height="59"><text x="0" y="43" font-family="Liberation Sans,sans-serif" font-size="38.3" font-weight="normal" font-style="normal" fill="#000" textLength="168.5" lengthAdjust="spacingAndGlyphs">-8.09 dBV</text></svg></div><span class="t" style="left:944px;top:155px;font-size:12px;text-decoration:underline">Overlays</span><span class="t" style="left:924px;top:186px;font-size:12px;transform-origin:0 0;transform:rotate(-90deg)">Set</span><span class="t" style="left:939px;top:186px;font-size:12px;transform-origin:0 0;transform:rotate(-90deg)">On</span><div class="a" style="left:923px;top:189px;width:14px;height:14px;background:#ece9d8;border:1px solid;border-color:#fff #716f64 #716f64 #fff;box-shadow:inset -1px -1px 0 #aca899"><span class="t" style="left:2px;top:0px;font-size:12px">1</span></div><div class="a" style="left:940px;top:190px;width:13px;height:13px;background:#fff;border:1px solid;border-color:#716f64 #fff #fff #716f64;box-shadow:inset 1px 1px 0 #aca899"></div><svg class="a" style="left:956px;top:187px;overflow:visible" width="52" height="20"><text x="0" y="14" font-family="Liberation Sans,sans-serif" font-size="12" font-weight="normal" font-style="normal" fill="#008000" textLength="49.5" lengthAdjust="spacingAndGlyphs">Overlay 1</text></svg><div class="a" style="left:923px;top:205px;width:14px;height:14px;background:#ece9d8;border:1px solid;border-color:#fff #716f64 #716f64 #fff;box-shadow:inset -1px -1px 0 #aca899"><span class="t" style="left:2px;top:0px;font-size:12px">2</span></div><div class="a" style="left:940px;top:206px;width:13px;height:13px;background:#fff;border:1px solid;border-color:#716f64 #fff #fff #716f64;box-shadow:inset 1px 1px 0 #aca899"></div><svg class="a" style="left:956px;top:203px;overflow:visible" width="52" height="20"><text x="0" y="14" font-family="Liberation Sans,sans-serif" font-size="12" font-weight="normal" font-style="normal" fill="#00a0a0" textLength="49.5" lengthAdjust="spacingAndGlyphs">Overlay 2</text></svg><div class="a" style="left:923px;top:221px;width:14px;height:14px;background:#ece9d8;border:1px solid;border-color:#fff #716f64 #716f64 #fff;box-shadow:inset -1px -1px 0 #aca899"><span class="t" style="left:2px;top:0px;font-size:12px">3</span></div><div class="a" style="left:940px;top:222px;width:13px;height:13px;background:#fff;border:1px solid;border-color:#716f64 #fff #fff #716f64;box-shadow:inset 1px 1px 0 #aca899"></div><svg class="a" style="left:956px;top:219px;overflow:visible" width="52" height="20"><text x="0" y="14" font-family="Liberation Sans,sans-serif" font-size="12" font-weight="normal" font-style="normal" fill="#800080" textLength="49.5" lengthAdjust="spacingAndGlyphs">Overlay 3</text></svg><div class="a" style="left:923px;top:237px;width:14px;height:14px;background:#ece9d8;border:1px solid;border-color:#fff #716f64 #716f64 #fff;box-shadow:inset -1px -1px 0 #aca899"><span class="t" style="left:2px;top:0px;font-size:12px">4</span></div><div class="a" style="left:940px;top:238px;width:13px;height:13px;background:#fff;border:1px solid;border-color:#716f64 #fff #fff #716f64;box-shadow:inset 1px 1px 0 #aca899"></div><svg class="a" style="left:956px;top:235px;overflow:visible" width="52" height="20"><text x="0" y="14" font-family="Liberation Sans,sans-serif" font-size="12" font-weight="normal" font-style="normal" fill="#ff00ff" textLength="49.5" lengthAdjust="spacingAndGlyphs">Overlay 4</text></svg><div class="a" style="left:923px;top:253px;width:14px;height:14px;background:#ece9d8;border:1px solid;border-color:#fff #716f64 #716f64 #fff;box-shadow:inset -1px -1px 0 #aca899"><span class="t" style="left:2px;top:0px;font-size:12px">5</span></div><div class="a" style="left:940px;top:254px;width:13px;height:13px;background:#fff;border:1px solid;border-color:#716f64 #fff #fff #716f64;box-shadow:inset 1px 1px 0 #aca899"></div><svg class="a" style="left:956px;top:251px;overflow:visible" width="52" height="20"><text x="0" y="14" font-family="Liberation Sans,sans-serif" font-size="12" font-weight="normal" font-style="normal" fill="#804000" textLength="49.5" lengthAdjust="spacingAndGlyphs">Overlay 5</text></svg><div class="a" style="left:923px;top:269px;width:14px;height:14px;background:#ece9d8;border:1px solid;border-color:#fff #716f64 #716f64 #fff;box-shadow:inset -1px -1px 0 #aca899"><span class="t" style="left:2px;top:0px;font-size:12px">6</span></div><div class="a" style="left:940px;top:270px;width:13px;height:13px;background:#fff;border:1px solid;border-color:#716f64 #fff #fff #716f64;box-shadow:inset 1px 1px 0 #aca899"></div><svg class="a" style="left:956px;top:267px;overflow:visible" width="52" height="20"><text x="0" y="14" font-family="Liberation Sans,sans-serif" font-size="12" font-weight="normal" font-style="normal" fill="#ff0000" textLength="49.5" lengthAdjust="spacingAndGlyphs">Overlay 6</text></svg><div class="a" style="left:923px;top:285px;width:14px;height:14px;background:#ece9d8;border:1px solid;border-color:#fff #716f64 #716f64 #fff;box-shadow:inset -1px -1px 0 #aca899"><span class="t" style="left:2px;top:0px;font-size:12px">C</span></div><div class="a" style="left:940px;top:286px;width:13px;height:13px;background:#fff;border:1px solid;border-color:#716f64 #fff #fff #716f64;box-shadow:inset 1px 1px 0 #aca899"></div><svg class="a" style="left:956px;top:283px;overflow:visible" width="64" height="20"><text x="0" y="14" font-family="Liberation Sans,sans-serif" font-size="12" font-weight="normal" font-style="normal" fill="#000" textLength="61" lengthAdjust="spacingAndGlyphs">Composite</text></svg><div class="a" style="left:920px;top:302px;width:64px;height:18px;background:#ece9d8;border:1px solid;border-color:#fff #716f64 #716f64 #fff;box-shadow:inset -1px -1px 0 #aca899"><span class="t" style="left:5px;top:2px;font-size:12px">Options...</span></div><div class="a" style="left:3px;top:709px;width:1019px;height:2px;background:#fff"></div><div class="st" style="left:5px;width:118px"><span>Stopped</span></div><div class="st" style="left:125px;width:101px"><span>Real Time</span></div><div class="st" style="left:228px;width:71px"><span>96000 Hz</span></div><div class="st" style="left:301px;width:51px"><span>24 Bit</span></div><div class="st" style="left:354px;width:51px"><span>Stereo</span></div><div class="st" style="left:407px;width:101px"><span>FFT 131072 pts</span></div><div class="st" style="left:510px;width:73px"><span>Hanning</span></div><div class="st" style="left:585px;width:436px"><span></span></div><div class="a" style="left:0;top:738px;width:1024px;height:30px;background:linear-gradient(#1f52c8 0,#3f8be9 1px,#3d88e8 2px,#2a6ade 3.500px,#2259d6 5px,#2158d5 10px,#245fdc 18px,#2765e3 25px,#2560dc 27px,#1c4cb8 29px,#183e9c 30px)"><div class="a" style="left:0;top:-1px;width:1024px;height:1px;background:#fff"></div><div class="a" style="left:0;top:0;width:95px;height:30px;border-radius:0 9px 11px 0/0 10px 18px 0;background:linear-gradient(#3f8a3f 0,#6cc06c 1px,#4aa84a 3px,#3c9a3c 6px,#379237 14px,#3a983a 22px,#2f802f 27px,#2a6a2a 30px);box-shadow:inset -3px 0 4px rgba(10,60,10,.45),2px 0 3px rgba(10,30,90,.5)"><svg class="a" style="left:10px;top:5px" width="20" height="19" viewBox="0 0 20 19"><path d="M2.500 2.500Q6 0.500 9.500 2.800L8.300 8.300Q5 6.200 1.200 8Z" fill="#e8542c"/><path d="M10.800 3.400Q14.500 5.500 18.500 3.400L17.300 9Q13.500 11 9.600 8.900Z" fill="#80c848"/><path d="M1 9.500Q4.500 7.500 8 9.800L6.800 15.300Q3.500 13.200 -0.300 15Z" fill="#4c90f4"/><path d="M9.300 10.400Q13 12.500 17 10.400L15.800 16Q12 18 8.100 15.900Z" fill="#f8cc30"/></svg><svg class="a" style="left:35px;top:-1px;overflow:visible" width="41" height="29"><text x="0" y="21" font-family="Liberation Sans,sans-serif" font-size="18.5" font-weight="bold" font-style="italic" fill="#fff" textLength="38" lengthAdjust="spacingAndGlyphs" style="text-shadow:1px 1px 1px #1c4a1c">пуск</text></svg></div><div class="a" style="left:106px;top:3px;width:159px;height:24px;border-radius:3px;background:#1e52b7;box-shadow:inset 1px 1px 1px #133a8e,inset -1px -1px 0 #2d62c8"><svg class="a" style="left:10px;top:4px" width="16" height="16" viewBox="0 0 16 16"><rect x="0" y="0" width="16" height="16" fill="#fff"/><path d="M3.500 1V15M6.500 1V15M9.500 1V15M12.500 1V15M1 3.500H15M1 6.500H15M1 9.500H15M1 12.500H15" stroke="#b4b4b4" stroke-width="1" shape-rendering="crispEdges"/><path d="M0.500 0.500H15.500V15.500H0.500Z" fill="none" stroke="#303030"/><path d="M1.500 2.500H5L7 4.500L9 3L11 2L13 5L15 9" fill="none" stroke="#f01828" stroke-width="1.200"/><path d="M1.500 3.800H4L5 5.500H7L9 7.500L11 4L13 8L15 12.500" fill="none" stroke="#1020f0" stroke-width="1.400"/><text x="3" y="13.800" font-family="Liberation Serif,serif" font-style="italic" font-weight="bold" font-size="9" fill="#000" textLength="10" lengthAdjust="spacingAndGlyphs">SC</text></svg><svg class="a" style="left:30px;top:3.5px;overflow:visible" width="113" height="18"><text x="0" y="13.0" font-family="Liberation Sans,sans-serif" font-size="11.3" font-weight="normal" font-style="normal" fill="#fff" textLength="110" lengthAdjust="spacingAndGlyphs">SpectraPLUS-SC Sou...</text></svg></div><div class="a" style="left:838px;top:7px;width:16px;height:15px;background:#3c68d4"></div><svg class="a" style="left:839px;top:6px;overflow:visible" width="16" height="18"><text x="0" y="13" font-family="Liberation Sans,sans-serif" font-size="11.3" font-weight="normal" font-style="normal" fill="#fff" textLength="13" lengthAdjust="spacingAndGlyphs">RU</text></svg><svg class="a" style="left:860px;top:7px" width="18" height="15"><path d="M4.500 3.500V2.500Q4.500 1.500 5.500 1.500H8.500Q9.500 1.500 9.500 2.500" stroke="#000" fill="none" stroke-dasharray="1 1"/><rect x="1.500" y="4.500" width="14" height="9" rx="1" fill="#fff" stroke="#000"/><path d="M3 7.500H14M3 9.500H14" stroke="#000" stroke-dasharray="1 1"/><path d="M5 11.500H12" stroke="#000"/></svg><div class="a" style="left:895px;top:0;width:129px;height:30px;background:linear-gradient(#1a6cc8 0,#37b4f8 1px,#1c9cf2 2px,#1492ea 4px,#0f88e2 10px,#118ce6 22px,#0e7ad2 27px,#0a5cb0 30px);border-left:1px solid #0c3c90;box-shadow:inset 1px 0 0 #38b0f8"></div><svg class="a" style="left:905px;top:6px" width="18" height="18"><rect x="7.500" y="1.500" width="8" height="7" fill="#28367a" stroke="#a8b4d8"/><rect x="8.500" y="2.500" width="6" height="4" fill="#3c50a8"/><rect x="1.500" y="5.500" width="8" height="7" fill="#303f88" stroke="#b4c0e0"/><rect x="2.500" y="6.500" width="6" height="4" fill="#4860b8"/><path d="M2 14.500Q5.500 12.500 9 14.500Q5.500 16.500 2 14.500Z" fill="#d8dcec"/><path d="M9.500 9.500L16 16M16 9.500L9.500 16" stroke="#e81c1c" stroke-width="2.300"/></svg><svg class="a" style="left:924px;top:6px" width="18" height="18"><defs><radialGradient id="spk" cx="0.4" cy="0.4" r="0.7"><stop offset="0" stop-color="#e8e8e8"/><stop offset="0.5" stop-color="#8a8a8a"/><stop offset="1" stop-color="#383838"/></radialGradient></defs><ellipse cx="7.500" cy="7.500" rx="5.800" ry="6.500" fill="url(#spk)" transform="rotate(-20 7.500 7.500)"/><ellipse cx="6.800" cy="7.200" rx="2.600" ry="3.200" fill="#2c2c34" transform="rotate(-20 7 7)"/><ellipse cx="6.300" cy="6.600" rx="1" ry="1.300" fill="#9098a8"/><path d="M10 16.500Q14 15 16 10.500M12.500 17Q15.500 15.500 17 12" stroke="#a0b4ff" fill="none" stroke-width="0.900"/></svg><svg class="a" style="left:942px;top:5px" width="18" height="20"><path d="M2.500 7.500L6 3.500L6 5.500Q10 4.500 11.500 8L9 9.500Q8 7.500 6 8.500L6 10.500Z" fill="#34c034" stroke="#0c6c1c" stroke-width="0.800" transform="rotate(-8 7 7)"/><path d="M3.500 14L11.500 9L15.500 11.500L7.500 17Z" fill="#c8c8c8" stroke="#303030" stroke-width="0.900"/><path d="M3.500 14V16L7.500 19V17M7.500 19L15.500 13.500V11.500" fill="#808080" stroke="#303030" stroke-width="0.900"/><path d="M6.500 14L11 11.200M8 15L12.500 12.200" stroke="#484848" stroke-width="0.800"/></svg><svg class="a" style="left:959px;top:6px" width="19" height="19"><defs><radialGradient id="gb" cx="0.35" cy="0.3" r="0.8"><stop offset="0" stop-color="#b8f090"/><stop offset="0.5" stop-color="#58c038"/><stop offset="1" stop-color="#2a8a1a"/></radialGradient></defs><circle cx="9" cy="9" r="8.300" fill="url(#gb)"/><circle cx="10.800" cy="10.800" r="5.800" fill="#6424c4" stroke="#f0e8ff" stroke-width="0.900"/><circle cx="3.800" cy="11" r="1.200" fill="#fff"/><text x="10.800" y="14" font-size="9" fill="#fff" text-anchor="middle" font-family="Liberation Sans,sans-serif">8</text></svg><svg class="a" style="left:984px;top:6px;overflow:visible" width="30" height="18"><text x="0" y="13" font-family="Liberation Sans,sans-serif" font-size="11.3" font-weight="normal" font-style="normal" fill="#fff" textLength="27" lengthAdjust="spacingAndGlyphs">13:14</text></svg></div></body></html>
